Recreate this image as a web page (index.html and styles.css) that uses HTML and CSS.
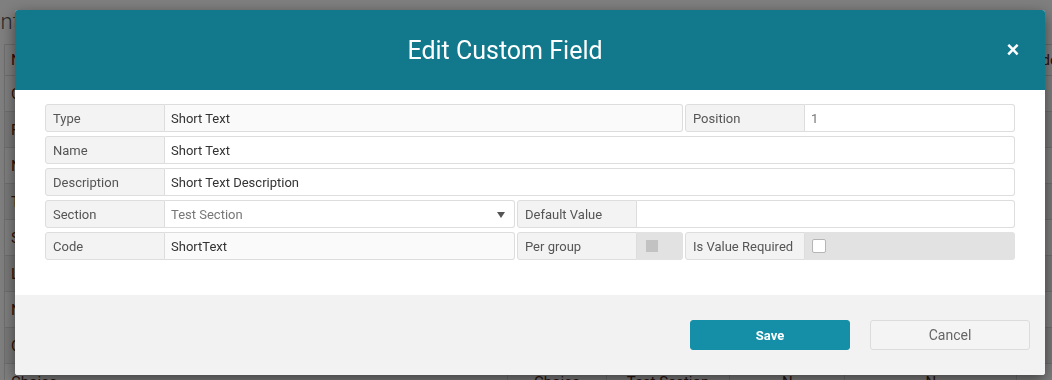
FILE: index.html
```html
<!DOCTYPE html>
<html lang="en">
<head>
    <meta charset="UTF-8">
    <meta name="viewport" content="width=device-width, initial-scale=1.0">
    <title>Edit Custom Field</title>
    <link rel="stylesheet" href="styles.css">
</head>

<body>
    <div class="page">
        <h1 class="page-title">Content Fields</h1>
        <table class="grid">
            <tr class="head"><td>Name</td><td>Type</td><td>Section</td><td>Per group</td><td>Required</td><td>Code</td></tr>
            <tr><td>Choice</td><td>Choice</td><td>Test Section</td><td>N</td><td>N</td><td></td></tr>
            <tr class="alt"><td>First Name</td><td>Short Text</td><td>Test Section</td><td>N</td><td>N</td><td></td></tr>
            <tr><td>Number</td><td>Number</td><td>Test Section</td><td>N</td><td>N</td><td></td></tr>
            <tr class="alt"><td>Text</td><td>Long Text</td><td>Test Section</td><td>N</td><td>N</td><td></td></tr>
            <tr><td>Short Text</td><td>Short Text</td><td>Test Section</td><td>N</td><td>N</td><td></td></tr>
            <tr class="alt"><td>Long Text</td><td>Long Text</td><td>Test Section</td><td>N</td><td>N</td><td></td></tr>
            <tr><td>Number</td><td>Number</td><td>Test Section</td><td>N</td><td>N</td><td></td></tr>
            <tr class="alt"><td>Checkbox</td><td>Checkbox</td><td>Test Section</td><td>N</td><td>N</td><td></td></tr>
            <tr><td>Choice</td><td>Choice</td><td>Test Section</td><td>N</td><td>N</td><td></td></tr>
        </table>
    </div>

    <div class="backdrop">
        <div class="modal">
            <div class="modal-header">
                <h2 class="modal-title">Edit Custom Field</h2>
                <button class="close" type="button">&times;</button>
            </div>

            <div class="modal-body">
                <div class="row">
                    <div class="group grow">
                        <span class="label">Type</span>
                        <span class="value readonly">Short Text</span>
                    </div>
                    <div class="group w-pos">
                        <span class="label">Position</span>
                        <span class="value muted">1</span>
                    </div>
                </div>
                <div class="row">
                    <div class="group grow">
                        <span class="label">Name</span>
                        <span class="value">Short Text</span>
                    </div>
                </div>
                <div class="row">
                    <div class="group grow">
                        <span class="label">Description</span>
                        <span class="value">Short Text Description</span>
                    </div>
                </div>
                <div class="row">
                    <div class="group w-half">
                        <span class="label">Section</span>
                        <span class="value select muted">Test Section<span class="caret"></span></span>
                    </div>
                    <div class="group grow">
                        <span class="label">Default Value</span>
                        <span class="value"></span>
                    </div>
                </div>
                <div class="row">
                    <div class="group w-half">
                        <span class="label">Code</span>
                        <span class="value readonly">ShortText</span>
                    </div>
                    <div class="group">
                        <span class="label">Per group</span>
                        <span class="check-cell small"><span class="box disabled"></span></span>
                    </div>
                    <div class="group grow">
                        <span class="label">Is Value Required</span>
                        <span class="check-cell"><span class="box"></span></span>
                    </div>
                </div>
            </div>

            <div class="modal-footer">
                <button class="btn btn-save" type="button">Save</button>
                <button class="btn btn-cancel" type="button">Cancel</button>
            </div>
        </div>
    </div>
</body>
</html>
```

FILE: styles.css
```css
body {
    margin: 0;
    font-family: 'Roboto', 'Liberation Sans', sans-serif;
    background: #ffffff;
    color: #333333;
    overflow: hidden;
}

/* page behind the dialog */
.page-title {
    font-size: 22px;
    font-weight: 300;
    color: #555555;
    margin: 10px 0 10px -26px;
    height: 24px;
    line-height: 24px;
}

.grid {
    width: 1060px;
    margin-left: 4px;
    border-collapse: collapse;
    font-size: 15px;
}

.grid td {
    height: 35px;
    padding: 0 6px;
    border-top: 1px solid #dddddd;
    border-left: 1px solid #dddddd;
    color: #5a2a1a;
    text-align: center;
}

.grid td:first-child {
    text-align: left;
}

.grid .head td {
    height: 30px;
    color: #5a1a1a;
}

.grid .alt td {
    background: #f3f3f3;
}

.grid td:nth-child(1) { width: 495px; }
.grid td:nth-child(2) { width: 86px; }
.grid td:nth-child(3) { width: 111px; }
.grid td:nth-child(4) { width: 103px; }
.grid td:nth-child(5) { width: 160px; }

/* dialog */
.backdrop {
    position: fixed;
    top: 0;
    right: 0;
    bottom: 0;
    left: 0;
    background: rgba(0, 0, 0, 0.5);
}

.modal {
    width: 1030px;
    margin: 10px 0 0 15px;
    background: #ffffff;
    border-radius: 3px;
    box-shadow: 0 5px 15px rgba(0, 0, 0, 0.5);
    overflow: hidden;
}

.modal-header {
    display: flex;
    align-items: center;
    height: 80px;
    background: #12788c;
}

.modal-title {
    flex: 1;
    margin: 0;
    text-align: center;
    font-size: 25px;
    font-weight: 400;
    color: #ffffff;
}

.close {
    width: 36px;
    margin-right: 14px;
    padding: 0;
    border: none;
    background: none;
    color: #ffffff;
    font-family: 'Liberation Sans', sans-serif;
    font-size: 22px;
    font-weight: bold;
    line-height: 1;
    cursor: pointer;
}

.modal-body {
    display: flex;
    flex-direction: column;
    gap: 4px;
    padding: 14px 30px 35px;
}

.row {
    display: flex;
    gap: 2px;
    height: 28px;
}

.group {
    display: flex;
}

.grow { flex: 1; }
.w-pos { width: 330px; }
.w-half { width: 470px; }

.label,
.value,
.check-cell {
    display: flex;
    align-items: center;
    box-sizing: border-box;
    height: 28px;
    font-size: 13px;
}

.label {
    width: 120px;
    flex: none;
    padding-left: 7px;
    background: #f3f3f3;
    border: 1px solid #dddddd;
    border-radius: 3px 0 0 3px;
    color: #555555;
}

.value {
    flex: 1;
    position: relative;
    padding-left: 6px;
    background: #ffffff;
    border: 1px solid #dddddd;
    border-left: none;
    border-radius: 0 3px 3px 0;
    color: #333333;
}

.value.readonly {
    background: #fafafa;
}

.value.muted {
    color: #777777;
}

.caret {
    position: absolute;
    right: 9px;
    top: 11px;
    border-left: 4px solid transparent;
    border-right: 4px solid transparent;
    border-top: 6px solid #555555;
}

.check-cell {
    flex: 1;
    padding-left: 7px;
    background: #e2e2e2;
    border-radius: 0 3px 3px 0;
}

.check-cell.small {
    width: 46px;
    flex: none;
}

.box {
    width: 14px;
    height: 14px;
    box-sizing: border-box;
    background: #ffffff;
    border: 1px solid #b5b5b5;
    border-radius: 2px;
}

.box.disabled {
    width: 12px;
    height: 12px;
    margin-left: 2px;
    background: #c2c2c2;
    border: none;
    border-radius: 0;
}

.modal-footer {
    display: flex;
    justify-content: flex-end;
    gap: 20px;
    height: 80px;
    box-sizing: border-box;
    padding: 25px 15px 0 0;
    background: #f2f2f2;
}

.btn {
    width: 160px;
    height: 30px;
    border-radius: 3px;
    font-family: 'Roboto', 'Liberation Sans', sans-serif;
    font-size: 13px;
    cursor: pointer;
}

.btn-save {
    background: #158fa7;
    border: 1px solid #158fa7;
    color: #ffffff;
    font-weight: bold;
}

.btn-cancel {
    background: #f4f4f4;
    border: 1px solid #dcdcdc;
    color: #666666;
    font-size: 14px;
}
```
